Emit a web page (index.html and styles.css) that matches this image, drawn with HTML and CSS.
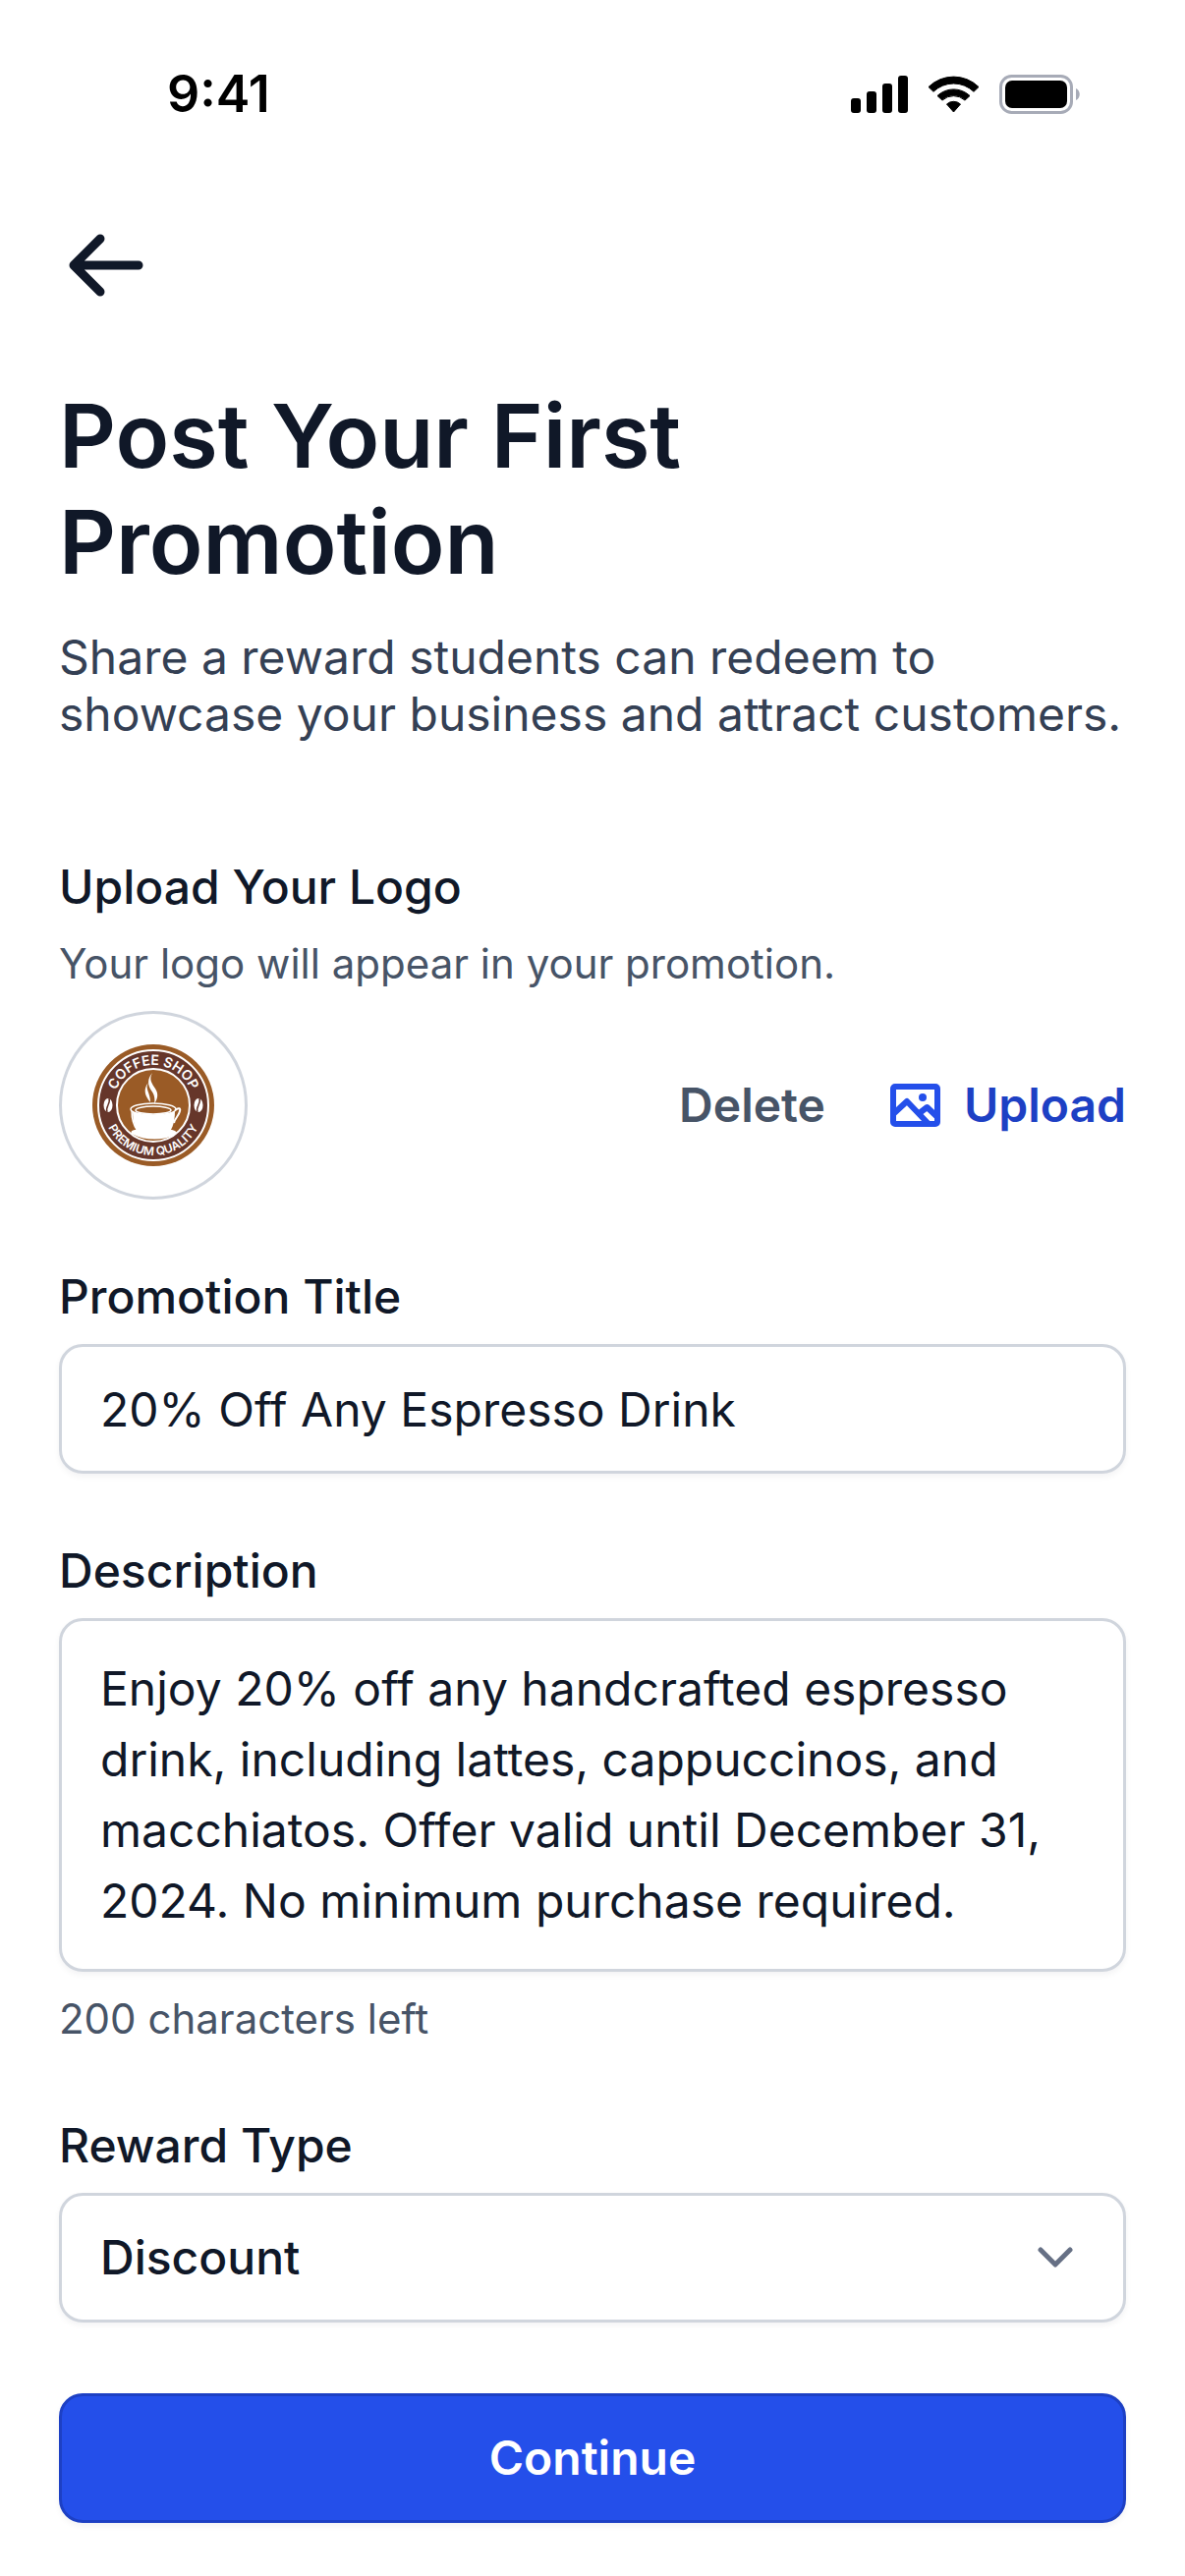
FILE: index.html
```html
<!DOCTYPE html>
<html lang="en">
<head>
    <meta charset="UTF-8">
    <meta name="viewport" content="width=device-width, initial-scale=1.0">
    <title>Post Your First Promotion</title>
    <link rel="stylesheet" href="styles.css">
</head>
<body>
    <div class="status-bar">
        <span class="time">9:41</span>
        <svg class="status-icons" width="234" height="42" viewBox="0 0 234 42" aria-hidden="true">
            <!-- signal -->
            <rect x="0" y="25" width="10" height="15" rx="3"/>
            <rect x="16" y="18" width="10" height="22" rx="3"/>
            <rect x="32" y="10" width="10" height="30" rx="3"/>
            <rect x="48" y="2" width="10" height="38" rx="3"/>
            <!-- wifi -->
            <path d="M79 13.5a36.5 36.5 0 0 1 51 0l-5 4.8a29.5 29.5 0 0 0-41 0z" stroke="#000" stroke-width="1" stroke-linejoin="round"/>
            <path d="M88 22.5a24 24 0 0 1 33 0l-5 4.6a17 17 0 0 0-23 0z" stroke="#000" stroke-width="1" stroke-linejoin="round"/>
            <path d="M97.5 31a10.5 10.5 0 0 1 14 0l-7 8z" stroke="#000" stroke-width="1" stroke-linejoin="round"/>
            <!-- battery -->
            <rect x="152.5" y="2.5" width="72" height="37" rx="11" fill="none" stroke="#a7abb7" stroke-width="3"/>
            <rect x="157" y="7" width="63" height="28" rx="7"/>
            <path d="M229 15c5 2 5 10 0 12z" fill="#a7abb7"/>
        </svg>
    </div>

    <main class="screen">
        <button class="back" type="button" aria-label="Back">
            <svg width="96" height="72" viewBox="0 0 96 72" aria-hidden="true">
                <path d="M81 36H15M42 9L15 36L42 63" />
            </svg>
        </button>

        <h1>Post Your First Promotion</h1>
        <p class="intro">Share a reward students can redeem to showcase your business and attract customers.</p>

        <form class="form">
            <section class="field">
                <h2 class="label">Upload Your Logo</h2>
                <p class="hint">Your logo will appear in your promotion.</p>
                <div class="logo-row">
                    <div class="logo">
                        <svg width="124" height="124" viewBox="0 0 124 124" role="img" aria-label="Coffee Shop, Premium Quality">
                            <defs>
                                <path id="arc-top" d="M21 62a41 41 0 0 1 82 0"/>
                                <path id="arc-bottom" d="M11 62a51 51 0 0 0 102 0"/>
                            </defs>
                            <circle cx="62" cy="62" r="62" fill="#9a5b26"/>
                            <circle cx="62" cy="62" r="56" fill="#66362a" stroke="#fff" stroke-width="2"/>
                            <circle cx="62" cy="62" r="37" fill="#9a5b26" stroke="#fff" stroke-width="2"/>
                            <text class="logo-top"><textPath href="#arc-top" startOffset="50%">COFFEE SHOP</textPath></text>
                            <text class="logo-bottom"><textPath href="#arc-bottom" startOffset="50%">PREMIUM QUALITY</textPath></text>
                            <!-- beans -->
                            <ellipse cx="16" cy="62" rx="4.5" ry="7" fill="#fff"/>
                            <ellipse cx="108" cy="62" rx="4.5" ry="7" fill="#fff"/>
                            <path d="M17 55c2 5-4 8-2 14M109 55c2 5-4 8-2 14" fill="none" stroke="#66362a" stroke-width="1.5"/>
                            <!-- cup -->
                            <path d="M41 67c0 14 3 21 9 27h24c7-6 10-13 10-27z" fill="#fff"/>
                            <path d="M43 87c-5 1-4 4-1 5c12 6 30 6 42 0c3-1 2-4-3-5z" fill="#fff"/>
                            <path d="M40 67c0 10 2 16 6 21" fill="none" stroke="#fff" stroke-width="1.5"/>
                            <ellipse cx="62" cy="66" rx="23" ry="6" fill="#9a5b26" stroke="#fff" stroke-width="1.5"/>
                            <ellipse cx="62" cy="67" rx="18" ry="4" fill="#9a5b26" stroke="#fff" stroke-width="1.5"/>
                            <path d="M84 67c4-3 6-2 5 1c-1 5-5 7-6 12" fill="none" stroke="#fff" stroke-width="2"/>
                            <!-- steam -->
                            <path d="M61 29c-4 7 0 11 3 16c4 6 2 11-1 16c1-6 0-10-3-14c-4-6-4-12 1-18zM57 39c-4 6 2 10 2 20c-5-6-8-13-2-20z" fill="#fff"/>
                        </svg>
                    </div>
                    <div class="logo-actions">
                        <button class="link-btn" type="button">Delete</button>
                        <button class="link-btn upload" type="button">
                            <svg width="51" height="44" viewBox="0 0 51 44" aria-hidden="true">
                                <rect x="3" y="3" width="45" height="38" rx="2"/>
                                <path d="M3 31L17 18L39 41M31 29L37.5 24L48 34"/>
                                <circle class="dot" cx="33" cy="14" r="4"/>
                            </svg>
                            Upload
                        </button>
                    </div>
                </div>
            </section>

            <div class="field">
                <label class="label" for="title">Promotion Title</label>
                <input class="control" type="text" id="title" value="20% Off Any Espresso Drink">
            </div>

            <div class="field">
                <label class="label" for="description">Description</label>
                <textarea class="control" id="description" rows="4">Enjoy 20% off any handcrafted espresso drink, including lattes, cappuccinos, and macchiatos. Offer valid until December 31, 2024. No minimum purchase required.</textarea>
                <p class="hint counter">200 characters left</p>
            </div>

            <div class="field">
                <label class="label" for="reward">Reward Type</label>
                <div class="select">
                    <select class="control" id="reward">
                        <option>Discount</option>
                    </select>
                    <svg class="chevron" width="36" height="21" viewBox="0 0 36 21" aria-hidden="true">
                        <path d="M3 3L18 18L33 3"/>
                    </svg>
                </div>
            </div>

            <button class="submit" type="submit">Continue</button>
        </form>
    </main>
</body>
</html>
```

FILE: styles.css
```css
* { box-sizing: border-box; margin: 0; padding: 0; }
body { font-family: Inter, "Liberation Sans", sans-serif; font-size: 48px; line-height: 72px; color: #101828; background: white; }
button, input, textarea, select { font: inherit; color: inherit; }
button { background: none; border: none; cursor: pointer; }
svg { display: block; }

.status-bar { display: flex; justify-content: space-between; align-items: center; padding: 60px 106px 0 170px; color: black; }
.time { font-size: 52px; font-weight: 600; }

.screen { padding: 102px 60px 54px; }
.back { display: block; margin-bottom: 84px; }
.back path { fill: none; stroke: #101828; stroke-width: 9; stroke-linecap: round; stroke-linejoin: round; }

h1 { max-width: 800px; font-size: 90px; line-height: 108px; font-weight: 600; }
.intro { margin-top: 34px; line-height: 58px; color: #344054; }

.form { margin-top: 111px; display: flex; flex-direction: column; gap: 63px; }
.field { display: flex; flex-direction: column; }
.label { margin-bottom: 12px; font-size: 48px; font-weight: 500; }
.hint { font-size: 42px; line-height: 60px; color: #475467; }
.counter { margin-top: 18px; }

.logo-row { margin-top: 18px; display: flex; justify-content: space-between; align-items: center; }
.logo { display: flex; align-items: center; justify-content: center; width: 192px; height: 192px; border: 3px solid #d0d5dd; border-radius: 50%; }
.logo text { font-family: Inter, sans-serif; fill: white; text-anchor: middle; font-weight: 600; }
.logo-top { font-size: 14px; }
.logo-bottom { font-size: 12px; }
.logo-actions { display: flex; align-items: center; gap: 66px; }
.link-btn { font-weight: 600; color: #475467; }
.upload { display: flex; align-items: center; gap: 24px; color: #1d40c4; }
.upload svg { fill: none; stroke: #244fea; stroke-width: 6; stroke-linejoin: round; }
.upload .dot { fill: #244fea; stroke: none; }

.control { display: block; width: 100%; padding: 27px 39px; background: white; border: 3px solid #d0d5dd; border-radius: 24px; box-shadow: 0 3px 6px rgba(16, 24, 40, 0.05); }
input.control, select.control { height: 132px; }
textarea.control { height: 360px; padding: 33px 39px; resize: none; overflow: hidden; }
.select { position: relative; }
select.control { appearance: none; font-weight: 500; }
.chevron { position: absolute; right: 54px; top: 55px; pointer-events: none; }
.chevron path { fill: none; stroke: #667085; stroke-width: 5; stroke-linecap: round; stroke-linejoin: round; }

.submit { margin-top: 9px; height: 132px; background: #244fea; color: white; font-weight: 600; border: 3px solid #1d40c4; border-radius: 24px; box-shadow: 0 3px 6px rgba(16, 24, 40, 0.05); }
```
